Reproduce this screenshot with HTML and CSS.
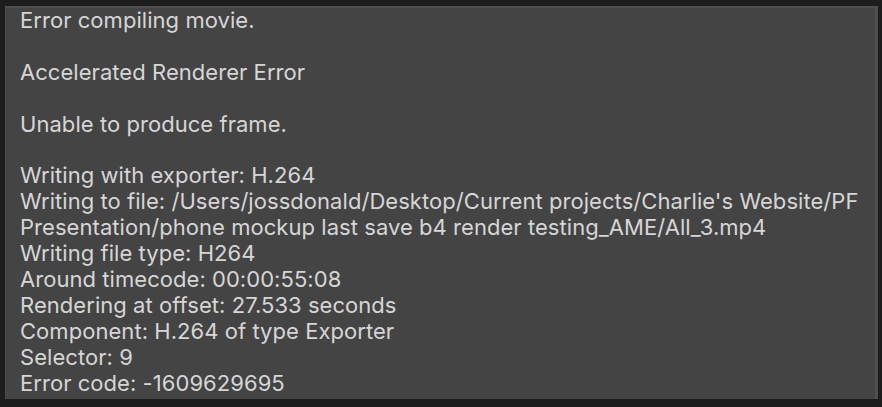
FILE: index.html
```html
<!DOCTYPE html>
<html>
<head>
<meta charset="utf-8">
<link rel="stylesheet" href="styles.css">
</head>
<body>
<div class="panel">
<div class="log">
<p>Error compiling movie.</p>
<p class="blank">&nbsp;</p>
<p>Accelerated Renderer Error</p>
<p class="blank">&nbsp;</p>
<p>Unable to produce frame.</p>
<p class="blank">&nbsp;</p>
<p>Writing with exporter: H.264</p>
<p>Writing to file: /Users/jossdonald/Desktop/Current projects/Charlie's Website/PF</p>
<p>Presentation/phone mockup last save b4 render testing_AME/All_3.mp4</p>
<p>Writing file type: H264</p>
<p>Around timecode: 00:00:55:08</p>
<p>Rendering at offset: 27.533 seconds</p>
<p>Component: H.264 of type Exporter</p>
<p>Selector: 9</p>
<p>Error code: -1609629695</p>
</div>
</div>
</body>
</html>
```
FILE: styles.css
```css
html, body {
  margin: 0;
  padding: 0;
  background: #1d1d1d;
  width: 882px;
  height: 407px;
  overflow: hidden;
}
body {
  padding: 6px 4px 0 5px;
  box-sizing: border-box;
}
.panel {
  width: 873px;
  height: 393px;
  box-sizing: border-box;
  background: #444444;
  border-top: 2px solid #505050;
  border-left: 1px solid #4c4c4c;
  border-right: 3px solid #4e4e4e;
  padding: 0 0 0 14px;
}
.log {
  font-family: Inter, "Noto Sans", sans-serif;
  font-size: 22px;
  line-height: 25.9px;
  letter-spacing: 0.05px;
  color: #d6d6d6;
}
.log p {
  margin: 0;
  white-space: nowrap;
}
```
